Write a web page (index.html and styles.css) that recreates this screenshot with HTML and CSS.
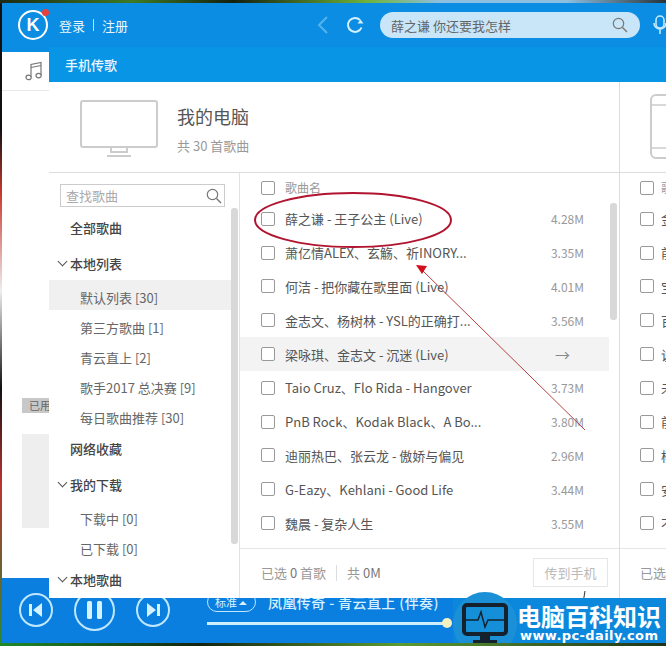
FILE: index.html
```html
<!DOCTYPE html>
<html lang="zh-CN">
<head>
    <meta charset="UTF-8">
    <title>手机传歌</title>
    <link rel="stylesheet" href="styles.css">
</head>
<body>
    <div class="app">
        <!-- Top bar -->
        <header class="topbar">
            <div class="logo">K<span class="logo-dot"></span></div>
            <a class="user-link">登录</a>
            <span class="user-sep"></span>
            <a class="user-link">注册</a>
            <svg class="back-icon" width="12" height="18" viewBox="0 0 12 18"><path d="M10 1 2 9l8 8" fill="none" stroke="#55b4ee" stroke-width="2"/></svg>
            <svg class="refresh-icon" width="18" height="18" viewBox="0 0 18 18"><path d="M15.5 11.5A7 7 0 1 1 14 4" fill="none" stroke="#d5f0ff" stroke-width="2"/><path d="M11.5 7.5h6l-3-4z" fill="#d5f0ff"/></svg>
            <div class="search-pill">
                <span>薛之谦 你还要我怎样</span>
                <svg width="16" height="16" viewBox="0 0 16 16"><circle cx="6.5" cy="6.5" r="5.2" fill="none" stroke="#777" stroke-width="1.2"/><path d="m10.5 10.5 4.5 4.5" stroke="#777" stroke-width="1.4"/></svg>
            </div>
            <svg class="mic-icon" width="14" height="20" viewBox="0 0 14 20"><rect x="3" y="1" width="8" height="12" rx="4" fill="none" stroke="#cdeeff" stroke-width="1.5"/><path d="M1 8a6 6 0 0 0 12 0M7 14v5" fill="none" stroke="#cdeeff" stroke-width="1.5"/></svg>
        </header>

        <div class="app-body">
            <!-- Left tabs -->
            <aside class="side-tabs">
                <div class="tab-music">
                    <svg width="18" height="20" viewBox="0 0 18 20"><path d="M6 16V3.5L16 1.5V14" fill="none" stroke="#777" stroke-width="1.2"/><path d="M6 6.5 16 4.5" stroke="#777" stroke-width="1.2"/><ellipse cx="3.6" cy="16.4" rx="2.6" ry="2.2" fill="none" stroke="#777" stroke-width="1.2"/><ellipse cx="13.6" cy="14.6" rx="2.6" ry="2.2" fill="none" stroke="#777" stroke-width="1.2"/></svg>
                </div>
                <div class="used-label">已用</div>
                <div class="used-box"></div>
            </aside>

            <!-- Transfer panel -->
            <main class="transfer">
                <div class="transfer-title">手机传歌</div>
                <div class="devices">
                    <!-- Computer -->
                    <section class="device device-pc">
                        <div class="device-head">
                            <svg class="pc-icon" width="78" height="58" viewBox="0 0 78 58"><rect x="1" y="1" width="76" height="46" rx="2" fill="none" stroke="#ccc" stroke-width="2"/><path d="M31 47v5h16v-5M27 56h24" fill="none" stroke="#ccc" stroke-width="2"/></svg>
                            <div>
                                <div class="device-name">我的电脑</div>
                                <div class="device-count">共 30 首歌曲</div>
                            </div>
                        </div>
                        <div class="device-body">
                            <nav class="song-nav">
                                <div class="nav-search">
                                    <span>查找歌曲</span>
                                    <svg width="16" height="16" viewBox="0 0 16 16"><circle cx="6.5" cy="6.5" r="5.2" fill="none" stroke="#777" stroke-width="1.2"/><path d="m10.5 10.5 4.5 4.5" stroke="#777" stroke-width="1.4"/></svg>
                                </div>
                                <div class="nav-head">全部歌曲</div>
                                <div class="nav-head nav-gap"><i class="chevron"></i>本地列表</div>
                                <div class="sub-list">
                                    <div class="sub-item active">默认列表 [30]</div>
                                    <div class="sub-item">第三方歌曲 [1]</div>
                                    <div class="sub-item">青云直上 [2]</div>
                                    <div class="sub-item">歌手2017 总决赛 [9]</div>
                                    <div class="sub-item">每日歌曲推荐 [30]</div>
                                </div>
                                <div class="nav-head">网络收藏</div>
                                <div class="nav-head nav-gap"><i class="chevron"></i>我的下载</div>
                                <div class="sub-list">
                                    <div class="sub-item">下载中 [0]</div>
                                    <div class="sub-item">已下载 [0]</div>
                                </div>
                                <div class="nav-head"><i class="chevron"></i>本地歌曲</div>
                                <div class="nav-scroll"></div>
                            </nav>
                            <div class="song-list">
                                <div class="song-head"><i class="check"></i><span>歌曲名</span></div>
                                <div class="song-rows">
                                    <div class="song-row"><i class="check"></i><span class="song-name">薛之谦 - 王子公主 (Live)</span><span class="song-size">4.28M</span></div>
                                    <div class="song-row"><i class="check"></i><span class="song-name">萧亿情ALEX、玄觞、祈INORY...</span><span class="song-size">3.35M</span></div>
                                    <div class="song-row"><i class="check"></i><span class="song-name">何洁 - 把你藏在歌里面 (Live)</span><span class="song-size">4.01M</span></div>
                                    <div class="song-row"><i class="check"></i><span class="song-name">金志文、杨树林 - YSL的正确打...</span><span class="song-size">3.56M</span></div>
                                    <div class="song-row hover"><i class="check"></i><span class="song-name">梁咏琪、金志文 - 沉迷 (Live)</span><span class="song-size song-arrow">→</span></div>
                                    <div class="song-row"><i class="check"></i><span class="song-name">Taio Cruz、Flo Rida - Hangover</span><span class="song-size">3.73M</span></div>
                                    <div class="song-row"><i class="check"></i><span class="song-name">PnB Rock、Kodak Black、A Bo...</span><span class="song-size">3.80M</span></div>
                                    <div class="song-row"><i class="check"></i><span class="song-name">迪丽热巴、张云龙 - 傲娇与偏见</span><span class="song-size">2.96M</span></div>
                                    <div class="song-row"><i class="check"></i><span class="song-name">G-Eazy、Kehlani - Good Life</span><span class="song-size">3.44M</span></div>
                                    <div class="song-row"><i class="check"></i><span class="song-name">魏晨 - 复杂人生</span><span class="song-size">3.55M</span></div>
                                </div>
                                <div class="song-foot">
                                    <span>已选 <b>0</b> 首歌</span>
                                    <span class="foot-sep"></span>
                                    <span>共 <b>0M</b></span>
                                    <button class="send-btn">传到手机</button>
                                </div>
                                <div class="list-scroll"></div>
                            </div>
                        </div>
                    </section>

                    <!-- Phone -->
                    <section class="device device-phone">
                        <div class="device-head">
                            <svg class="phone-icon" width="40" height="66" viewBox="0 0 40 66"><rect x="1" y="1" width="38" height="63" rx="5" fill="none" stroke="#ccc" stroke-width="2"/><path d="M1 11h38M1 54h38" stroke="#ccc" stroke-width="1.5"/></svg>
                        </div>
                        <div class="song-list">
                            <div class="song-head"><i class="check"></i><span>歌曲名</span></div>
                            <div class="song-rows">
                                <div class="song-row"><i class="check"></i><span class="song-name">金</span></div>
                                <div class="song-row"><i class="check"></i><span class="song-name">前</span></div>
                                <div class="song-row"><i class="check"></i><span class="song-name">宝</span></div>
                                <div class="song-row"><i class="check"></i><span class="song-name">百</span></div>
                                <div class="song-row"><i class="check"></i><span class="song-name">说</span></div>
                                <div class="song-row"><i class="check"></i><span class="song-name">未</span></div>
                                <div class="song-row"><i class="check"></i><span class="song-name">前</span></div>
                                <div class="song-row"><i class="check"></i><span class="song-name">杨</span></div>
                                <div class="song-row"><i class="check"></i><span class="song-name">安</span></div>
                                <div class="song-row"><i class="check"></i><span class="song-name">不</span></div>
                            </div>
                            <div class="song-foot"><span>已选</span></div>
                        </div>
                    </section>
                </div>
            </main>
        </div>

        <!-- Player -->
        <footer class="player">
            <button class="play-btn">
                <svg width="14" height="14" viewBox="0 0 14 14"><path d="M0 1h3v12H0zM13 0v14L4 7z" fill="#d6f1ff"/></svg>
            </button>
            <button class="play-btn play-main">
                <svg width="15" height="18" viewBox="0 0 15 18"><rect width="5" height="18" rx="1.5" fill="#d6f1ff"/><rect x="10" width="5" height="18" rx="1.5" fill="#d6f1ff"/></svg>
            </button>
            <button class="play-btn">
                <svg width="14" height="14" viewBox="0 0 14 14"><path d="M14 1h-3v12h3zM1 0v14l9-7z" fill="#d6f1ff"/></svg>
            </button>
            <div class="track">
                <div class="track-info">
                    <span class="quality">标准 <i class="quality-up"></i></span>
                    <span class="track-name">凤凰传奇 - 青云直上 (伴奏)</span>
                </div>
                <div class="track-bar"><span class="track-knob"></span></div>
            </div>
        </footer>
    </div>

    <!-- Annotation drawn over the screenshot -->
    <svg class="markup" width="666" height="646" viewBox="0 0 666 646">
        <ellipse cx="353" cy="220" rx="98" ry="27" fill="none" stroke="#b0142f" stroke-width="2"/>
        <path d="M585 430 422 270" fill="none" stroke="#b5413f" stroke-width="1"/>
        <path d="m416 265 11 1-5 8z" fill="#d0101a"/>
        <path d="M585 591l-1.500 9" stroke="#333" stroke-width="1"/>
    </svg>

    <!-- Site watermark -->
    <div class="watermark">
        <div class="wm-badge">
            <svg width="46" height="42" viewBox="0 0 46 42"><rect x="2" y="2" width="42" height="29" rx="3" fill="#1590d8" stroke="#15222e" stroke-width="4"/><path d="M4 17h12l3-8 4 15 3-7h16" fill="none" stroke="#15222e" stroke-width="1.500"/><path d="M18 31h10v6h7v5H11v-5h7z" fill="#15222e"/></svg>
        </div>
        <div class="wm-text">
            <div class="wm-title">电脑百科知识</div>
            <div class="wm-url">www.pc-daily.com</div>
        </div>
    </div>
</body>
</html>
```

FILE: styles.css
```css
* {
    margin: 0;
    padding: 0;
    box-sizing: border-box;
}

body {
    width: 666px;
    height: 646px;
    overflow: hidden;
    position: relative;
    font-family: "Noto Sans CJK SC", "Open Sans", sans-serif;
    font-size: 13px;
    color: #555;
    background:
        linear-gradient(90deg, #1c2a16 0, #3f7a26 20%, #14200f 35%, #6fb23a 55%, #8fbfe0 66%, #8fbfe0 85%, #26333a 100%) top / 100% 3px no-repeat,
        linear-gradient(90deg, #1f8a2a 0, #16230f 30%, #5d9a32 60%, #20331a 100%) bottom / 100% 3px no-repeat,
        linear-gradient(180deg, #111 0, #111 20%, #c83a30 30%, #eee 45%, #111 60%, #b33 75%, #2a8a30 100%);
}

.app {
    margin: 3px 0 3px 2px;
    height: 640px;
    display: flex;
    flex-direction: column;
}

/* Top bar */
.topbar {
    height: 44px;
    flex-shrink: 0;
    background-color: #0a8de2;
    color: #fff;
    display: flex;
    align-items: center;
    padding-left: 16px;
}

.topbar > * {
    flex-shrink: 0;
}

.logo {
    width: 30px;
    height: 30px;
    border: 2px solid #fff;
    border-radius: 50%;
    position: relative;
    display: flex;
    align-items: center;
    justify-content: center;
    font-family: "Liberation Sans", sans-serif;
    font-size: 18px;
    font-weight: 700;
    margin-right: 11px;
}

.logo-dot {
    position: absolute;
    top: -3px;
    right: -3px;
    width: 7px;
    height: 7px;
    border-radius: 50%;
    background-color: #e8413c;
}

.user-link {
    color: #eaf7ff;
    font-size: 13px;
    white-space: nowrap;
}

.user-sep {
    width: 1px;
    height: 12px;
    background-color: #bde3fb;
    margin: 0 8px;
}

.back-icon {
    margin-left: 189px;
}

.refresh-icon {
    margin-left: 17px;
}

.search-pill {
    width: 260px;
    height: 26px;
    margin-left: 16px;
    border-radius: 13px;
    background-color: #c9e6f9;
    color: #666;
    display: flex;
    align-items: center;
    justify-content: space-between;
    padding: 0 12px 0 11px;
}

.mic-icon {
    margin-left: 13px;
}

/* Body */
.app-body {
    flex: 1;
    min-height: 0;
    display: flex;
    background-color: #fff;
}

.side-tabs {
    width: 47px;
    flex-shrink: 0;
    border-top: 5px solid #0a8de2;
}

.tab-music {
    height: 39px;
    border-bottom: 1px solid #e8e8e8;
    display: flex;
    align-items: center;
    justify-content: center;
    padding-left: 16px;
}

.used-label {
    margin: 307px 0 0 20px;
    height: 15px;
    background-color: #c8c8c8;
    font-size: 11px;
    line-height: 15px;
    padding-left: 7px;
    color: #666;
    white-space: nowrap;
    overflow: hidden;
}

.used-box {
    margin: 21px 0 0 20px;
    height: 94px;
    background-color: #eee;
}

.transfer {
    flex: 1;
    min-width: 0;
    margin-bottom: -20px;
    position: relative;
    z-index: 1;
    display: flex;
    flex-direction: column;
    background-color: #fff;
}

.transfer-title {
    height: 35px;
    flex-shrink: 0;
    background-color: #0895e5;
    color: #eaf7ff;
    font-size: 13px;
    font-weight: 500;
    line-height: 35px;
    padding-left: 16px;
}

.devices {
    flex: 1;
    min-height: 0;
    display: flex;
    overflow: hidden;
}

.device {
    display: flex;
    flex-direction: column;
    min-width: 0;
}

.device-pc {
    width: 571px;
    flex-shrink: 0;
    border-right: 1px solid #ddd;
}

.device-phone {
    flex: 1;
    overflow: hidden;
}

.device-head {
    height: 91px;
    flex-shrink: 0;
    border-bottom: 1px solid #ddd;
    display: flex;
    align-items: center;
    padding: 4px 0 0 31px;
}

.pc-icon {
    margin-right: 20px;
}

.phone-icon {
    flex-shrink: 0;
    margin-top: -4px;
}

.device-name {
    font-size: 18px;
    line-height: 24px;
    color: #555;
    margin-left: -1px;
}

.device-count {
    font-size: 13px;
    color: #999;
    margin: 8px 0 0 -1px;
}

.device-body {
    flex: 1;
    min-height: 0;
    display: flex;
}

/* Song nav */
.song-nav {
    width: 191px;
    flex-shrink: 0;
    border-right: 1px solid #e2e2e2;
    position: relative;
    overflow: hidden;
}

.nav-search {
    height: 23px;
    margin: 11px 14px 6px 11px;
    border: 1px solid #ccc;
    display: flex;
    align-items: center;
    justify-content: space-between;
    padding: 0 2px 0 5px;
    color: #aaa;
}

.nav-head {
    height: 30px;
    display: flex;
    align-items: center;
    padding: 0 0 2px 21px;
    position: relative;
    font-weight: 500;
    color: #444;
}

.nav-gap {
    margin-top: 6px;
}

.chevron {
    position: absolute;
    left: 10px;
    top: 9px;
    width: 7px;
    height: 7px;
    border-right: 1px solid #555;
    border-bottom: 1px solid #555;
    transform: rotate(45deg);
}

.sub-list {
    margin: 1px 0 4px;
}

.sub-item {
    height: 30px;
    padding: 4px 0 0 31px;
    width: 182px;
    color: #666;
    display: flex;
    align-items: center;
}

.sub-item.active {
    background-color: #f0f0f0;
}

.nav-scroll {
    position: absolute;
    top: 35px;
    left: 182px;
    width: 7px;
    height: 336px;
    border-radius: 3px;
    background-color: #d8d8d8;
}

/* Song list */
.song-list {
    flex: 1;
    min-width: 0;
    display: flex;
    flex-direction: column;
    position: relative;
}

.song-head {
    height: 29px;
    flex-shrink: 0;
    display: flex;
    align-items: center;
    padding-left: 21px;
    color: #999;
    font-size: 12px;
    white-space: nowrap;
}

.song-rows {
    height: 338px;
    flex-shrink: 0;
    margin-bottom: 8px;
}

.song-row {
    height: 33.8px;
    width: 369px;
    display: flex;
    align-items: center;
    padding: 0 25px 0 21px;
    white-space: nowrap;
}

.song-row.hover {
    background-color: #f3f3f3;
}

.check {
    width: 14px;
    height: 14px;
    flex-shrink: 0;
    border: 1px solid #999;
    border-radius: 2px;
    background-color: #fff;
    margin-right: 10px;
}

.song-name {
    flex: 1;
    color: #555;
}

.song-size {
    color: #999;
    font-size: 12px;
}

.song-arrow {
    font-size: 15px;
    padding-right: 14px;
    color: #888;
}

.song-foot {
    height: 50px;
    flex-shrink: 0;
    border-top: 1px solid #e6e6e6;
    display: flex;
    align-items: center;
    padding: 0 11px 2px 21px;
    color: #999;
    white-space: nowrap;
}

.song-foot b {
    font-weight: 400;
    color: #777;
}

.foot-sep {
    width: 1px;
    height: 16px;
    background-color: #ddd;
    margin: 0 10px;
}

.send-btn {
    width: 75px;
    height: 29px;
    margin-left: auto;
    border: 1px solid #e6e6e6;
    background-color: #fff;
    color: #bbb;
    font-family: inherit;
    font-size: 13px;
}

.list-scroll {
    position: absolute;
    top: 30px;
    left: 370px;
    width: 7px;
    height: 117px;
    border-radius: 3px;
    background-color: #d8d8d8;
}

.device-phone .device-head {
    padding-left: 30px;
}

.device-phone .song-row,
.device-phone .song-head,
.device-phone .song-foot {
    padding-left: 20px;
}

.device-phone .check {
    margin-right: 7px;
}

/* Player */
.player {
    height: 65px;
    flex-shrink: 0;
    background-color: #0a7fe0;
    display: flex;
    align-items: center;
    padding: 0 0 2px 17px;
}

.play-btn {
    width: 34px;
    height: 34px;
    border: 2px solid #bfe8ff;
    border-radius: 50%;
    background: none;
    display: flex;
    align-items: center;
    justify-content: center;
    margin-top: 1px;
}

.play-main {
    width: 41px;
    height: 41px;
    margin: 1px 21px 0 21px;
}

.track {
    width: 240px;
    margin-left: 37px;
    align-self: flex-start;
    padding-top: 14px;
    color: #d6f1ff;
}

.track-info {
    display: flex;
    align-items: center;
    height: 20px;
    white-space: nowrap;
}

.quality {
    height: 20px;
    width: 49px;
    flex-shrink: 0;
    border: 1px solid #bfe8ff;
    border-radius: 10px;
    font-size: 11px;
    line-height: 19px;
    padding-left: 7px;
    margin-right: 12px;
}

.quality-up {
    display: inline-block;
    border-left: 4px solid transparent;
    border-right: 4px solid transparent;
    border-bottom: 4px solid #d6f1ff;
    vertical-align: 2px;
}

.track-name {
    font-size: 14px;
    font-weight: 500;
    letter-spacing: 0.4px;
}

.track-bar {
    height: 3px;
    margin-top: 10px;
    background-color: #cdeffc;
    position: relative;
}

.track-knob {
    position: absolute;
    right: -5px;
    top: -4px;
    width: 10px;
    height: 10px;
    border-radius: 50%;
    background-color: #f5f0c0;
}

/* Overlays */
.markup {
    position: absolute;
    top: 0;
    left: 0;
    z-index: 2;
}

.watermark {
    position: absolute;
    left: 453px;
    top: 592px;
    width: 213px;
    height: 51px;
    z-index: 3;
    overflow: hidden;
    display: flex;
    background: linear-gradient(#0b88dc, #0b88dc) 0 6px / 100% 45px no-repeat;
}

.wm-badge {
    width: 64px;
    height: 64px;
    flex-shrink: 0;
    border-radius: 50%;
    background-color: #1b90d6;
    padding: 11px 0 0 9px;
}

.wm-text {
    color: #fff;
    white-space: nowrap;
}

.wm-title {
    font-size: 24px;
    font-weight: 700;
    line-height: 26px;
    margin-top: 11px;
}

.wm-url {
    font-family: "DejaVu Sans", sans-serif;
    font-size: 13px;
    font-weight: 700;
    letter-spacing: 0.4px;
    line-height: 13px;
    margin-left: 3px;
}
```
